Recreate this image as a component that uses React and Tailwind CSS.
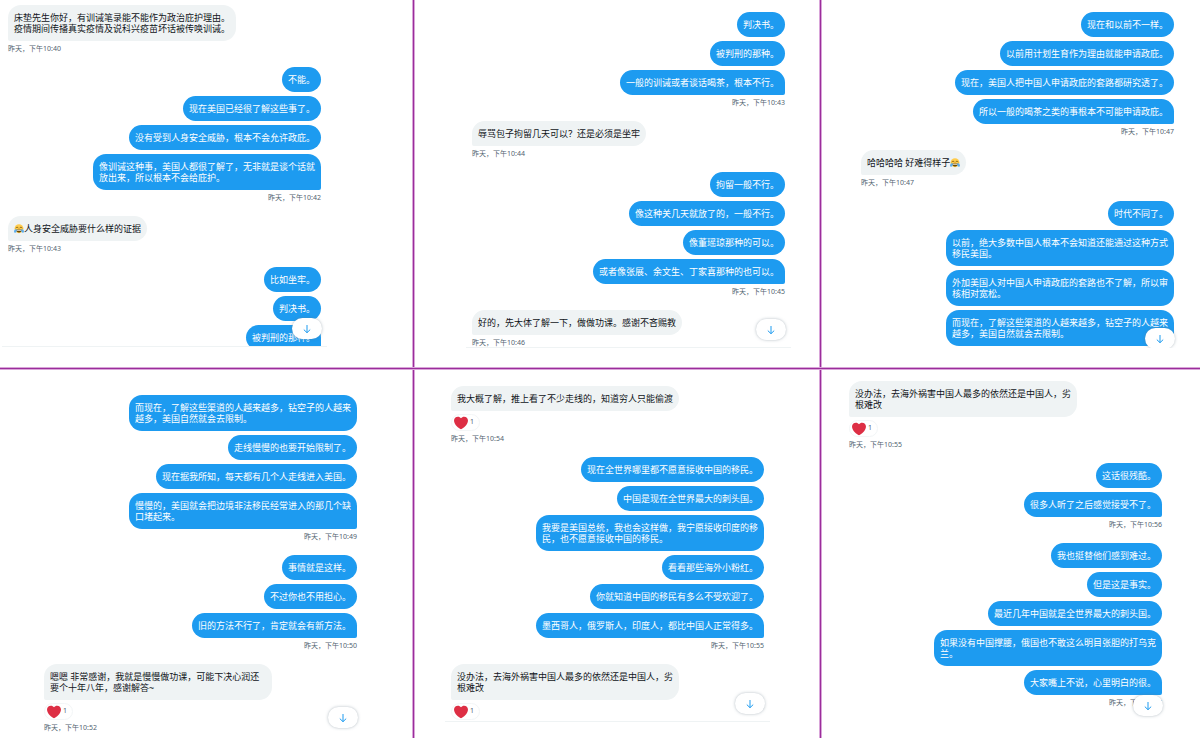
import { Fragment } from 'react';
import clsx from 'clsx';

const Joy = () => (
  <svg viewBox="0 0 36 36" className="inline-block h-[10px] w-[10px] align-[-2px]" role="img" aria-label="笑哭">
    <circle cx="18" cy="17" r="16" fill="#ffcc4d" />
    <path d="M8 20h20c0 7-4 11-10 11S8 27 8 20z" fill="#664500" />
    <path d="M10 21h16v3H10z" fill="#fff" />
    <path d="M7 14c2-4 6-4 8 0M21 14c2-4 6-4 8 0" fill="none" stroke="#664500" strokeWidth="2.5" strokeLinecap="round" />
    <path d="M9 18c-4 0-9 4-9 9 0 4 5 6 8 3 3-3 2-8 1-12zM27 18c4 0 9 4 9 9 0 4-5 6-8 3-3-3-2-8-1-12z" fill="#5dadec" />
  </svg>
);

const Heart = () => (
  <svg viewBox="0 0 36 36" className="h-[14px] w-[14px]" aria-hidden="true">
    <path
      fill="#dd2e44"
      d="M35.885 11.833c0-5.45-4.418-9.868-9.867-9.868-3.308 0-6.227 1.633-8.018 4.129-1.791-2.496-4.71-4.129-8.017-4.129-5.45 0-9.868 4.417-9.868 9.868 0 .772.098 1.52.266 2.241C1.751 22.587 11.216 31.568 18 34.034c6.783-2.466 16.249-11.447 17.617-19.959.17-.721.268-1.469.268-2.242z"
    />
  </svg>
);

const ArrowDown = () => (
  <svg viewBox="0 0 10 10" className="h-[10px] w-[10px]" fill="none" stroke="#1d9bf0" strokeWidth="1" aria-hidden="true">
    <path d="M5 1v7.6M1.8 5.6L5 8.7l3.2-3.1" />
  </svg>
);

// mine: messages bleus à droite, sinon gris à gauche
const panels = [
  {
    column: 'ml-[2px] pt-[5px]',
    footer: 'h-[20px]',
    button: 'bottom-[7px]',
    line: true,
    groups: [
      { texts: ['床垫先生你好，有训诫笔录能不能作为政治庇护理由。\n疫情期间传播真实疫情及说科兴疫苗坏话被传唤训诫。'], time: '10:40' },
      {
        mine: true,
        texts: [
          '不能。',
          '现在美国已经很了解这些事了。',
          '没有受到人身安全威胁，根本不会允许政庇。',
          '像训诫这种事，美国人都很了解了，无非就是谈个话就放出来，所以根本不会给庇护。',
        ],
        time: '10:42',
      },
      { texts: [<><Joy />人身安全威胁要什么样的证据</>], time: '10:43' },
      { mine: true, texts: ['比如坐牢。', '判决书。', '被判刑的那种。'] },
    ],
  },
  {
    column: 'ml-[51px] pt-[12px]',
    footer: 'h-[19px]',
    button: 'bottom-[7px]',
    line: true,
    groups: [
      { mine: true, texts: ['判决书。', '被判刑的那种。', '一般的训诫或者谈话喝茶，根本不行。'], time: '10:43' },
      { texts: ['辱骂包子拘留几天可以？还是必须是坐牢'], time: '10:44' },
      {
        mine: true,
        texts: ['拘留一般不行。', '像这种关几天就放了的，一般不行。', '像董瑶琼那种的可以。', '或者像张展、余文生、丁家喜那种的也可以。'],
        time: '10:45',
      },
      { texts: ['好的，先大体了解一下，做做功课。感谢不吝赐教'], time: '10:46' },
    ],
  },
  {
    column: 'ml-[33px] pt-[12px]',
    footer: 'h-[18px]',
    button: '-bottom-px',
    groups: [
      {
        mine: true,
        texts: [
          '现在和以前不一样。',
          '以前用计划生育作为理由就能申请政庇。',
          '现在，美国人把中国人申请政庇的套路都研究透了。',
          '所以一般的喝茶之类的事根本不可能申请政庇。',
        ],
        time: '10:47',
      },
      { texts: [<>哈哈哈哈 好难得样子<Joy /></>], time: '10:47' },
      {
        mine: true,
        open: true,
        texts: [
          '时代不同了。',
          '以前，绝大多数中国人根本不会知道还能通过这种方式移民美国。',
          '外加美国人对中国人申请政庇的套路也不了解，所以审核相对宽松。',
          '而现在，了解这些渠道的人越来越多，钻空子的人越来越多，美国自然就会去限制。',
        ],
      },
    ],
  },
  {
    column: 'ml-[38px] pt-[25px]',
    footer: 'h-0',
    button: 'bottom-[9px]',
    groups: [
      {
        mine: true,
        texts: [
          '而现在，了解这些渠道的人越来越多，钻空子的人越来越多，美国自然就会去限制。',
          '走线慢慢的也要开始限制了。',
          '现在据我所知，每天都有几个人走线进入美国。',
          '慢慢的，美国就会把边境非法移民经常进入的那几个缺口堵起来。',
        ],
        time: '10:49',
      },
      { mine: true, texts: ['事情就是这样。', '不过你也不用担心。', '旧的方法不行了，肯定就会有新方法。'], time: '10:50' },
      { texts: ['嗯嗯 非常感谢，我就是慢慢做功课，可能下决心润还要个十年八年，感谢解答~'], likes: 1, time: '10:52' },
    ],
  },
  {
    column: 'ml-[30px] pt-[16px]',
    footer: 'h-[16px]',
    button: 'bottom-[7px]',
    line: true,
    groups: [
      { texts: ['我大概了解，推上看了不少走线的，知道穷人只能偷渡'], likes: 1, time: '10:54' },
      {
        mine: true,
        texts: [
          '现在全世界哪里都不愿意接收中国的移民。',
          '中国是现在全世界最大的刺头国。',
          '我要是美国总统，我也会这样做，我宁愿接收印度的移民，也不愿意接收中国的移民。',
          '看看那些海外小粉红。',
          '你就知道中国的移民有多么不受欢迎了。',
          '墨西哥人，俄罗斯人，印度人，都比中国人正常得多。',
        ],
        time: '10:55',
      },
      { texts: ['没办法，去海外祸害中国人最多的依然还是中国人，劣根难改'], likes: 1 },
    ],
  },
  {
    column: 'ml-[21px] pt-[11px]',
    footer: 'h-0',
    button: 'bottom-[21px]',
    groups: [
      { texts: ['没办法，去海外祸害中国人最多的依然还是中国人，劣根难改'], likes: 1, time: '10:55' },
      { mine: true, texts: ['这话很残酷。', '很多人听了之后感觉接受不了。'], time: '10:56' },
      {
        mine: true,
        texts: [
          '我也挺替他们感到难过。',
          '但是这是事实。',
          '最近几年中国就是全世界最大的刺头国。',
          '如果没有中国撑腰，俄国也不敢这么明目张胆的打乌克兰。',
          '大家嘴上不说，心里明白的很。',
        ],
        time: '10:57',
      },
    ],
  },
];

function Group({ mine, texts, likes, time, open }) {
  return (
    <div className={clsx('mb-[13px] flex shrink-0 flex-col', mine ? 'items-end' : 'items-start')}>
      <div className={clsx('flex flex-col gap-1', mine ? 'items-end' : 'items-start')}>
        {texts.map((text, i) => (
          <p
            key={i}
            className={clsx(
              'max-w-[228px] rounded-[13px] px-[6px] py-[7px] text-[9px] leading-[11px] whitespace-pre-line',
              mine ? 'bg-[#1d9bf0] text-white' : 'rounded-bl-[2px] bg-[#eff3f4] text-[#0f1419]',
              mine && !open && i === texts.length - 1 && 'rounded-br-[2px]'
            )}
          >
            {text}
          </p>
        ))}
      </div>
      {likes && (
        <button
          type="button"
          className="mt-[3px] flex h-[17px] w-[29px] items-center gap-[2px] rounded-full border border-[#f3f6f7] pl-[2px] text-[7px] text-[#536471]"
        >
          <Heart />
          {likes}
        </button>
      )}
      {time && <time className="mt-[3px] text-[7px] leading-[10px] text-[#536471]">昨天，下午{time}</time>}
    </div>
  );
}

function Panel({ column, footer, button, line, groups }) {
  return (
    <section className="flex min-h-0 min-w-0 flex-col overflow-hidden">
      <div
        className={clsx(
          'relative flex min-h-0 max-w-[325px] flex-1 flex-col overflow-hidden border-b px-[6px]',
          line ? 'border-[#eff3f4]' : 'border-transparent',
          column
        )}
      >
        {groups.map((group, i) => (
          <Group key={i} {...group} />
        ))}
        <button
          type="button"
          aria-label="滚动到底部"
          className={clsx(
            'absolute right-[5px] flex h-[21px] w-[30px] items-center justify-center rounded-full bg-white shadow-[0_0_3px_rgba(101,119,134,0.5)]',
            button
          )}
        >
          <ArrowDown />
        </button>
      </div>
      <div className={clsx('shrink-0', footer)} />
    </section>
  );
}

export default function App() {
  return (
    <main
      lang="zh-CN"
      className="grid h-screen grid-cols-[412fr_3px_404fr_3px_378fr] grid-rows-[367fr_3px_368fr] overflow-hidden bg-white font-['Noto_Sans','Noto_Sans_CJK_SC',sans-serif]"
    >
      {panels.map((panel, i) => (
        <Fragment key={i}>
          {i === 3 && <div className="col-span-5 border-y border-[#d9a5d9] bg-[#9b2d9b]" />}
          {i % 3 !== 0 && <div className="border-x border-[#d9a5d9] bg-[#9b2d9b]" />}
          <Panel {...panel} />
        </Fragment>
      ))}
    </main>
  );
}
